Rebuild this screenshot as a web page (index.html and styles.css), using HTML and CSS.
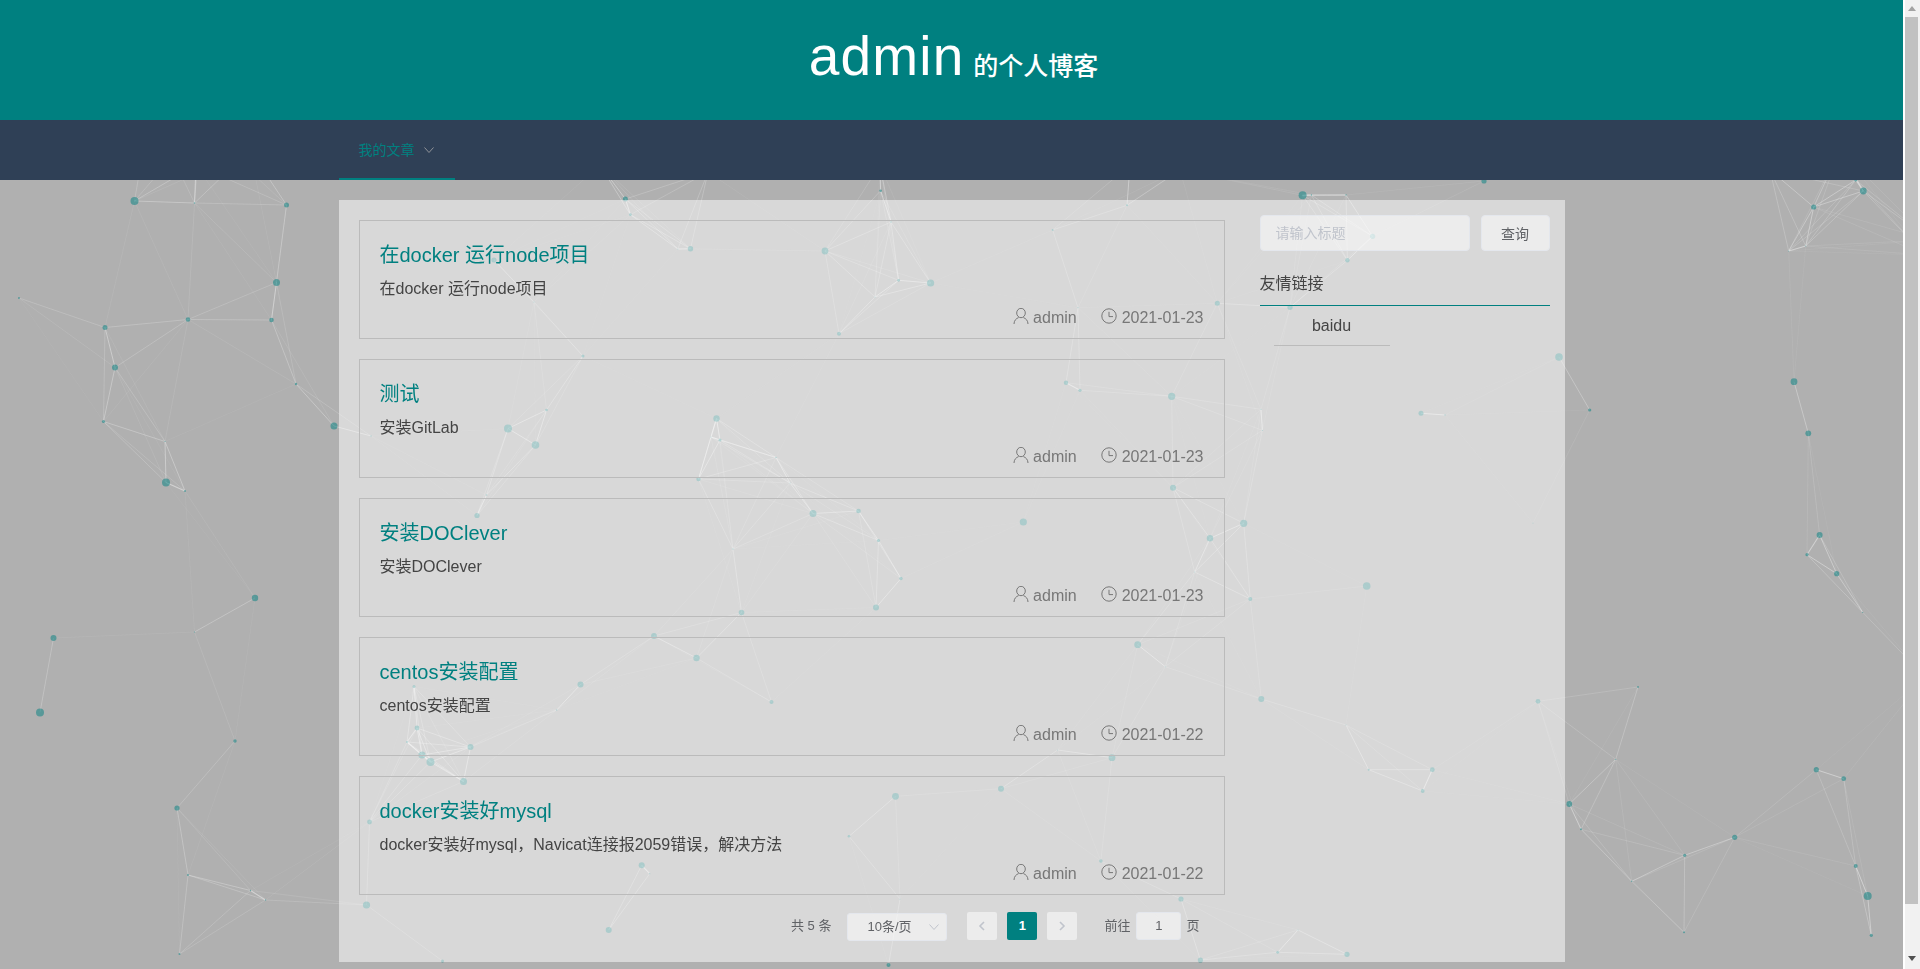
FILE: index.html
```html
<!DOCTYPE html>
<html lang="zh-CN">
<head>
<meta charset="utf-8">
<title>admin 的个人博客</title>
<link rel="stylesheet" href="styles.css">
</head>
<body>
<svg class="icon-defs" aria-hidden="true">
  <symbol id="i-user" viewBox="0 0 16 16"><ellipse cx="8" cy="5" rx="4.3" ry="4.7"/><path d="M1 16c0-3.4 2.2-5.6 4.6-6.4M15 16c0-3.4-2.2-5.6-4.6-6.4"/></symbol>
  <symbol id="i-clock" viewBox="0 0 16 16"><circle cx="8" cy="8" r="7.2"/><path d="M8 3.8V8.6H12"/></symbol>
  <symbol id="i-down" viewBox="0 0 12 12"><path d="M1.5 3.5 6 8.5l4.5-5"/></symbol>
  <symbol id="i-left" viewBox="0 0 12 12"><path d="M8 2 4 6l4 4"/></symbol>
  <symbol id="i-right" viewBox="0 0 12 12"><path d="M4 2l4 4-4 4"/></symbol>
</svg>
<div class="viewport">
  <div class="page">
    <canvas id="network" class="network" width="1903" height="969"></canvas>
    <header class="banner"><h1 class="banner-title"><span class="banner-name">admin</span> <span class="banner-sub">的个人博客</span></h1></header>
    <nav class="navbar">
      <div class="nav-inner">
        <a class="nav-item">我的文章<svg class="nav-arrow"><use href="#i-down"/></svg></a>
      </div>
    </nav>
    <main class="sheet">
      <section class="articles">
        <article class="post">
          <h2 class="post-title">在docker 运行node项目</h2>
          <p class="post-desc">在docker 运行node项目</p>
          <div class="post-meta"><span class="meta-item"><svg class="meta-icon"><use href="#i-user"/></svg>admin</span><span class="meta-item"><svg class="meta-icon meta-clock"><use href="#i-clock"/></svg>2021-01-23</span></div>
        </article>
        <article class="post">
          <h2 class="post-title">测试</h2>
          <p class="post-desc">安装GitLab</p>
          <div class="post-meta"><span class="meta-item"><svg class="meta-icon"><use href="#i-user"/></svg>admin</span><span class="meta-item"><svg class="meta-icon meta-clock"><use href="#i-clock"/></svg>2021-01-23</span></div>
        </article>
        <article class="post">
          <h2 class="post-title">安装DOClever</h2>
          <p class="post-desc">安装DOClever</p>
          <div class="post-meta"><span class="meta-item"><svg class="meta-icon"><use href="#i-user"/></svg>admin</span><span class="meta-item"><svg class="meta-icon meta-clock"><use href="#i-clock"/></svg>2021-01-23</span></div>
        </article>
        <article class="post">
          <h2 class="post-title">centos安装配置</h2>
          <p class="post-desc">centos安装配置</p>
          <div class="post-meta"><span class="meta-item"><svg class="meta-icon"><use href="#i-user"/></svg>admin</span><span class="meta-item"><svg class="meta-icon meta-clock"><use href="#i-clock"/></svg>2021-01-22</span></div>
        </article>
        <article class="post">
          <h2 class="post-title">docker安装好mysql</h2>
          <p class="post-desc">docker安装好mysql，Navicat连接报2059错误，解决方法</p>
          <div class="post-meta"><span class="meta-item"><svg class="meta-icon"><use href="#i-user"/></svg>admin</span><span class="meta-item"><svg class="meta-icon meta-clock"><use href="#i-clock"/></svg>2021-01-22</span></div>
        </article>
        <div class="pager">
          <span class="pager-total">共 5 条</span>
          <span class="pager-size">10条/页<svg class="pager-arrow"><use href="#i-down"/></svg></span>
          <span class="pager-btn"><svg class="pager-chev"><use href="#i-left"/></svg></span>
          <span class="pager-btn pager-current">1</span>
          <span class="pager-btn pager-last"><svg class="pager-chev"><use href="#i-right"/></svg></span>
          <span class="pager-goto">前往</span>
          <span class="pager-input">1</span>
          <span class="pager-unit">页</span>
        </div>
      </section>
      <aside class="side">
        <div class="search">
          <input class="search-input" type="text" placeholder="请输入标题">
          <button class="search-btn" type="button">查询</button>
        </div>
        <h3 class="links-title">友情链接</h3>
        <ul class="links">
          <li class="links-item">baidu</li>
        </ul>
      </aside>
    </main>
  </div>
  <div class="scrollbar">
    <span class="scroll-up"></span>
    <span class="scroll-thumb"></span>
    <span class="scroll-down"></span>
  </div>
</div>
<script src="script.js"></script>
</body>
</html>
```
FILE: styles.css
```css
* { box-sizing: border-box; }
html, body { margin: 0; padding: 0; height: 100%; overflow: hidden; }
body { font-family: "Liberation Sans", "Noto Sans CJK SC", sans-serif; color: #444; }
.icon-defs { width: 0; height: 0; display: block; }
.viewport { display: flex; width: 1920px; height: 969px; }
.page { position: relative; width: 1903px; height: 969px; background: #b0b0b0; overflow: hidden; }
.network { position: absolute; left: 0; top: 0; }

.banner { position: relative; height: 120px; background: #008080; padding-bottom: 7px; display: flex; align-items: center; justify-content: center; color: #fff; }
.banner-title { margin: 0; font-weight: 400; line-height: 1; padding-left: 4px; }
.banner-name { font-size: 55px; letter-spacing: 1.2px; }
.banner-sub { font-size: 25px; font-weight: 500; }

.navbar { position: relative; height: 60px; background: #2f4056; }
.nav-inner { width: 1226px; margin: 0 auto; height: 60px; display: flex; }
.nav-item { width: 116px; height: 60px; padding-left: 20px; line-height: 60px; font-size: 14px; color: #008080; border-bottom: 2px solid #008080; display: block; }
.nav-arrow { width: 12px; height: 12px; margin-left: 8px; fill: none; stroke: #909399; stroke-width: 1; vertical-align: -1px; }

.sheet { position: relative; width: 1226px; height: 762px; margin: 20px auto 0; background: rgba(255,255,255,.5); display: flex; }
.articles { width: 906px; padding: 20px 20px 0; display: flex; flex-direction: column; gap: 20px; }
.post { height: 119px; border: 1px solid #bbb; padding: 20px 20px 8px; }
.post-title { margin: 0; font-weight: 400; font-size: 20px; line-height: 28px; color: #008080; }
.post-desc { margin: 8px 0 0; font-size: 16px; line-height: 24px; color: #444; }
.post-meta { margin-top: 5px; height: 24px; display: flex; justify-content: flex-end; gap: 24px; font-size: 16px; line-height: 24px; color: #777; }
.meta-item { display: flex; align-items: center; }
.meta-icon { width: 16px; height: 16px; margin-right: 4px; fill: none; stroke: #777; stroke-width: 1; margin-top: -4px; }
.meta-clock { margin-right: 5px; }

.pager { margin-top: -3px; height: 30px; padding-right: 25px; display: flex; justify-content: flex-end; align-items: flex-start; font-size: 13px; line-height: 28px; color: #606266; }
.pager-total { margin-right: 16px; }
.pager-size { width: 100px; height: 28px; margin: 1px 20px 0 0; padding-left: 19px; line-height: 26px; background: rgba(255,255,255,.5); border: 1px solid #e4e7ed; border-radius: 3px; position: relative; display: block; }
.pager-arrow { position: absolute; right: 6px; top: 7px; width: 12px; height: 12px; fill: none; stroke: #c0c4cc; stroke-width: 1; }
.pager-btn { width: 30px; height: 28px; margin-right: 10px; background: rgba(255,255,255,.5); border-radius: 2px; display: flex; align-items: center; justify-content: center; }
.pager-last { margin-right: 27px; }
.pager-current { background: #008080; color: #fff; font-weight: 700; }
.pager-chev { width: 12px; height: 12px; fill: none; stroke: #c0c4cc; stroke-width: 1.6; }
.pager-goto { margin-right: 6px; }
.pager-input { width: 45px; height: 28px; margin: 0 5px 0 0; background: rgba(255,255,255,.5); border: 1px solid #e4e7ed; border-radius: 3px; text-align: center; line-height: 26px; }

.side { width: 320px; padding: 15px; }
.search { display: flex; gap: 11px; height: 36px; }
.search-input { width: 210px; height: 36px; padding: 0 15px; background: rgba(255,255,255,.5); border: 1px solid #e4e7ed; border-radius: 4px; font: 14px "Liberation Sans", "Noto Sans CJK SC", sans-serif; color: #606266; outline: none; }
.search-input::placeholder { color: #c0c4cc; }
.search-btn { width: 69px; height: 36px; padding: 0; background: rgba(255,255,255,.5); border: 1px solid #e4e7ed; border-radius: 4px; font: 14px "Liberation Sans", "Noto Sans CJK SC", sans-serif; color: #606266; }
.links-title { margin: 21px 0 0; height: 34px; font-weight: 400; font-size: 16px; line-height: 24px; color: #444; border-bottom: 1px solid #008080; }
.links { margin: 0; padding: 0; list-style: none; }
.links-item { width: 116px; margin-left: 14px; height: 40px; line-height: 39px; text-align: center; font-size: 16px; color: #444; border-bottom: 1px solid #bbb; }

.scrollbar { width: 17px; height: 969px; background: #f1f1f1; border-left: 2px solid #fff; display: flex; flex-direction: column; align-items: center; padding-right: 2px; }
.scroll-up { width: 0; height: 0; margin: 6px 0 6px; border: 4px solid transparent; border-top: 0; border-bottom: 5px solid #a3a3a3; }
.scroll-thumb { width: 13px; height: 887px; background: #c1c1c1; }
.scroll-down { width: 0; height: 0; margin-top: 52px; border: 4px solid transparent; border-bottom: 0; border-top: 5px solid #505050; }
```
FILE: script.js
```js
var nodes = [
[134.5,201,4],[194.5,203,.8],[286.5,205,2.5],[276.5,282.5,3.5],[271.5,320,2.3],[188,319.5,2.3],[105,327.5,2.5],[19,298,1],[115,367.5,3],[103.5,421.5,1.6],[165,441.5,.6],[166,482.5,4],[185,491,1],[296,384,1.2],[334,426,3.5],
[255,598,3.2],[53.5,638,3],[40,712.5,4],[194.5,632,.6],[235,741,1.7],[177,808,2.6],[188,875,1],[250.5,890.5,.7],[265.5,900,.7],[366.5,905,3.6],[179.5,954,1],
[414,686.5,1.5],[417,728,2.4],[407,742,1],[422,755,3.6],[430.5,762,4],[470.5,747,3],[463.5,781.5,3.5],[369.5,822,2.4],[442.5,961,1.5],
[508,428.5,4],[535.5,445,3.8],[546.5,410,1.3],[486.5,495,.8],[716.5,418.5,3.2],[720,440,1.5],[711,437,.5],[776,457.5,.8],[698.5,479,2.2],[790,483,.6],[813,513.5,3.5],[858.5,511,2.3],[878.5,540.5,1.6],[901,578.5,1.7],[876,607.5,3],[733,549,.7],[741.5,612.5,2.8],[654,636,2.9],[696.5,658,3.2],[580.5,684.5,3],[771.5,702,2],
[625.4,199,2.5],[630.4,214.7,1.4],[677.8,249,.5],[690.5,248.7,2.7],[825,251,3.4],[839,333.7,2],[880.6,190.7,1.3],[891,222,.8],[898.6,280.3,1.4],[875,297,.6],[930.6,283,3.6],[494,260,2.6],[534,302,.6],[583,356,1.5],[477,515.5,2.6],[371,436,.7],
[1302.6,195.3,4],[1311.4,195,.7],[1346,195,.7],[1372.6,236.3,2.6],[1347.4,260.3,2.2],[1290,307.3,2.6],[1217.3,303.3,2.5],[1127,205.3,1],[1052.7,230,1],[1078,307.7,.6],[1066,382.7,2.2],[1080,390.3,1.6],[1171.7,396.3,3.6],[1261,409.3,.6],[1262.4,430.3,.6],[1173,487.7,3],[1421,413.3,2.5],[1445,415,.7],[1559,357,3.8],[1484,181,2.6],
[1243.7,523.3,3.6],[1210,538.3,3.2],[1023.3,522,3.6],[1194.7,572,.5],[1250.3,599,2],[1366.7,586,3.8],[1137.7,644.7,3.4],[1165.3,666.7,.5],[1261.3,699,3],
[1346,725,.5],[1368.7,769.7,1],[1432.3,769.7,2.4],[1422.7,791,1.9],[1112,757.7,3.4],[1057.6,750,.5],[1001,788.7,3],[895.5,796.3,3.4],[1100.9,861,1.8],[1181,899,2.6],[1298,930,.5],[1277.7,952.3,1.4],[1347,954.3,2.6],[1200.4,960,2.6],[900,899,.5],[888.5,965,2],
[556.7,710,.7],[641.7,865.3,3],[649.7,873.7,.6],[608.7,930,3],[849,836.3,1.3],
[1836.7,573.7,2.6],[1862.7,612.3,.6],[1538,701.3,2.4],[1638,687,.9],[1615.7,759.3,.6],[1569.3,804,2.9],[1581,829.3,1],[1684.7,855.3,1.6],[1734.7,837.3,2.6],[1631.7,881.3,.7],[1684,932.3,1],[1816.3,769.7,2.6],[1843.7,778.7,2.4],[1855.7,866,2],[1867.7,896,4],[1871.3,935.3,1.6],
[1855.7,180,1.6],[1863.3,191,3.4],[1813.7,207,2.6],[1788.7,251,.5],[1805.7,246,.5],[1794,381.7,3.4],[1808.3,433.3,2.9],[1589.7,410,1.6],[1819.6,535,3],[1807,554.7,1.6],[1533,523,.5],
[196,165,1],[200,125,1],[150,110,1],[250,150,1],[600,165,1],[708,172,1],[880,165,1],[1130,165,1],[1180,170,1],[1770,170,1],[1840,150,1],[1925,255,1],[1930,240,1],[1925,677,1]
];
var canvas = document.getElementById('network');
var ctx = canvas.getContext('2d');
var max = 150;
for (var i = 0; i < nodes.length; i++) {
  for (var j = i + 1; j < nodes.length; j++) {
    var dx = nodes[i][0] - nodes[j][0], dy = nodes[i][1] - nodes[j][1];
    var d = Math.sqrt(dx * dx + dy * dy);
    if (d < max) {
      var w = (max - d) / max;
      ctx.strokeStyle = 'rgba(235,235,235,' + (w * .55 + .1) + ')';
      ctx.lineWidth = .5 + w * .6;
      ctx.beginPath();
      ctx.moveTo(nodes[i][0], nodes[i][1]);
      ctx.lineTo(nodes[j][0], nodes[j][1]);
      ctx.stroke();
    }
  }
}
ctx.fillStyle = 'rgba(0,128,128,.5)';
for (var k = 0; k < nodes.length; k++) {
  ctx.beginPath();
  ctx.arc(nodes[k][0], nodes[k][1], nodes[k][2], 0, Math.PI * 2);
  ctx.fill();
}
```
